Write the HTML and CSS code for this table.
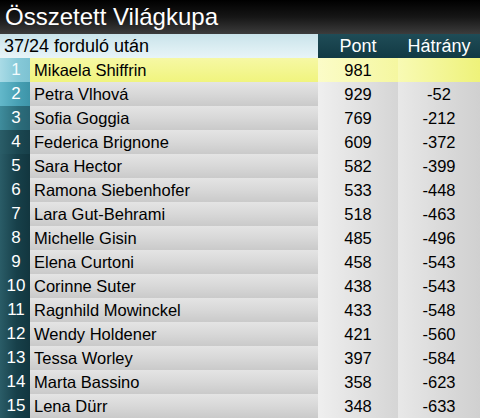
FILE: index.html
```html
<!DOCTYPE html>
<html lang="hu">
<head>
<meta charset="utf-8">
<title>Összetett Világkupa</title>
<link rel="stylesheet" href="styles.css">
</head>
<body>
<div class="board">
  <div class="title">Összetett Világkupa</div>
  <div class="head">
    <div class="round">37/24 forduló után</div>
    <div class="hcol">Pont</div>
    <div class="hcol">Hátrány</div>
  </div>
  <div class="rows">
    <div class="row leader"><div class="pos p1">1</div><div class="name">Mikaela Shiffrin</div><div class="pts">981</div><div class="gap"></div></div>
    <div class="row"><div class="pos p2">2</div><div class="name">Petra Vlhová</div><div class="pts">929</div><div class="gap">-52</div></div>
    <div class="row"><div class="pos p3">3</div><div class="name">Sofia Goggia</div><div class="pts">769</div><div class="gap">-212</div></div>
    <div class="row"><div class="pos p4">4</div><div class="name">Federica Brignone</div><div class="pts">609</div><div class="gap">-372</div></div>
    <div class="row"><div class="pos">5</div><div class="name">Sara Hector</div><div class="pts">582</div><div class="gap">-399</div></div>
    <div class="row"><div class="pos">6</div><div class="name">Ramona Siebenhofer</div><div class="pts">533</div><div class="gap">-448</div></div>
    <div class="row"><div class="pos">7</div><div class="name">Lara Gut-Behrami</div><div class="pts">518</div><div class="gap">-463</div></div>
    <div class="row"><div class="pos">8</div><div class="name">Michelle Gisin</div><div class="pts">485</div><div class="gap">-496</div></div>
    <div class="row"><div class="pos">9</div><div class="name">Elena Curtoni</div><div class="pts">458</div><div class="gap">-543</div></div>
    <div class="row"><div class="pos">10</div><div class="name">Corinne Suter</div><div class="pts">438</div><div class="gap">-543</div></div>
    <div class="row"><div class="pos">11</div><div class="name">Ragnhild Mowinckel</div><div class="pts">433</div><div class="gap">-548</div></div>
    <div class="row"><div class="pos">12</div><div class="name">Wendy Holdener</div><div class="pts">421</div><div class="gap">-560</div></div>
    <div class="row"><div class="pos">13</div><div class="name">Tessa Worley</div><div class="pts">397</div><div class="gap">-584</div></div>
    <div class="row"><div class="pos">14</div><div class="name">Marta Bassino</div><div class="pts">358</div><div class="gap">-623</div></div>
    <div class="row"><div class="pos">15</div><div class="name">Lena Dürr</div><div class="pts">348</div><div class="gap">-633</div></div>
  </div>
</div>
</body>
</html>
```

FILE: styles.css
```css
* { box-sizing: border-box; }
html, body { margin: 0; padding: 0; background: #ffffff; }
body { font-family: "Liberation Sans", Arial, sans-serif; width: 480px; height: 419px; overflow: hidden; }

.board { width: 480px; display: flex; flex-direction: column; }

.title {
  height: 34px;
  padding: 3px 0 0 5px;
  font-size: 24px;
  line-height: 28px;
  color: #ffffff;
  background: linear-gradient(to bottom, #000000 0%, #161616 50%, #3c3c3c 100%);
}

.head {
  height: 24px;
  display: grid;
  grid-template-columns: 318px 80px 82px;
  font-size: 18px;
  line-height: 24px;
}
.round {
  padding-left: 4px;
  color: #000;
  background: linear-gradient(to bottom, #c9e3ea 0%, #dceef3 60%, #e8f4f7 100%);
}
.hcol {
  text-align: center;
  color: #ffffff;
  background: linear-gradient(to bottom, #1f4c57 0%, #123a44 100%);
}

.rows { display: flex; flex-direction: column; }
.row {
  height: 24px;
  display: grid;
  grid-template-columns: 30px 288px 80px 82px;
  font-size: 16.5px;
  line-height: 24px;
  color: #000;
}
.pos {
  text-align: center;
  padding-left: 2px;
  font-size: 17px;
  color: #ffffff;
  background: linear-gradient(to right, #2a5c67 0%, #17404a 55%, #12363f 100%);
}
.pos.p1 { color: #f2fbfd; background: linear-gradient(to right, #a9dbe6 0%, #86c9d8 60%, #7dc2d2 100%); }
.pos.p2 { background: linear-gradient(to right, #63b8ca 0%, #47a0b4 60%, #3d94a8 100%); }
.pos.p3 { background: linear-gradient(to right, #3f8c9c 0%, #2c6d7b 60%, #276372 100%); }
.pos.p4 { background: linear-gradient(to right, #2a5d68 0%, #1b4751 60%, #173f49 100%); }

.name {
  padding-left: 4px;
  background: linear-gradient(to bottom, #e4e4e4 0%, #d8d8d8 50%, #cacaca 100%);
}
.pts {
  text-align: center;
  background: linear-gradient(to right, #efefef 0%, #e2e2e2 50%, #d5d5d5 100%);
}
.gap {
  text-align: center;
  background: linear-gradient(to right, #e8e8e8 0%, #dbdbdb 50%, #d0d0d0 100%);
}

.leader .name { background: linear-gradient(to bottom, #f6f8a4 0%, #f0f47e 100%); }
.leader .pts { background: linear-gradient(to right, #fbfcc8 0%, #f5f7a0 100%); }
.leader .gap { background: linear-gradient(to right, #f8fab4 0%, #eef27a 100%); }
```
